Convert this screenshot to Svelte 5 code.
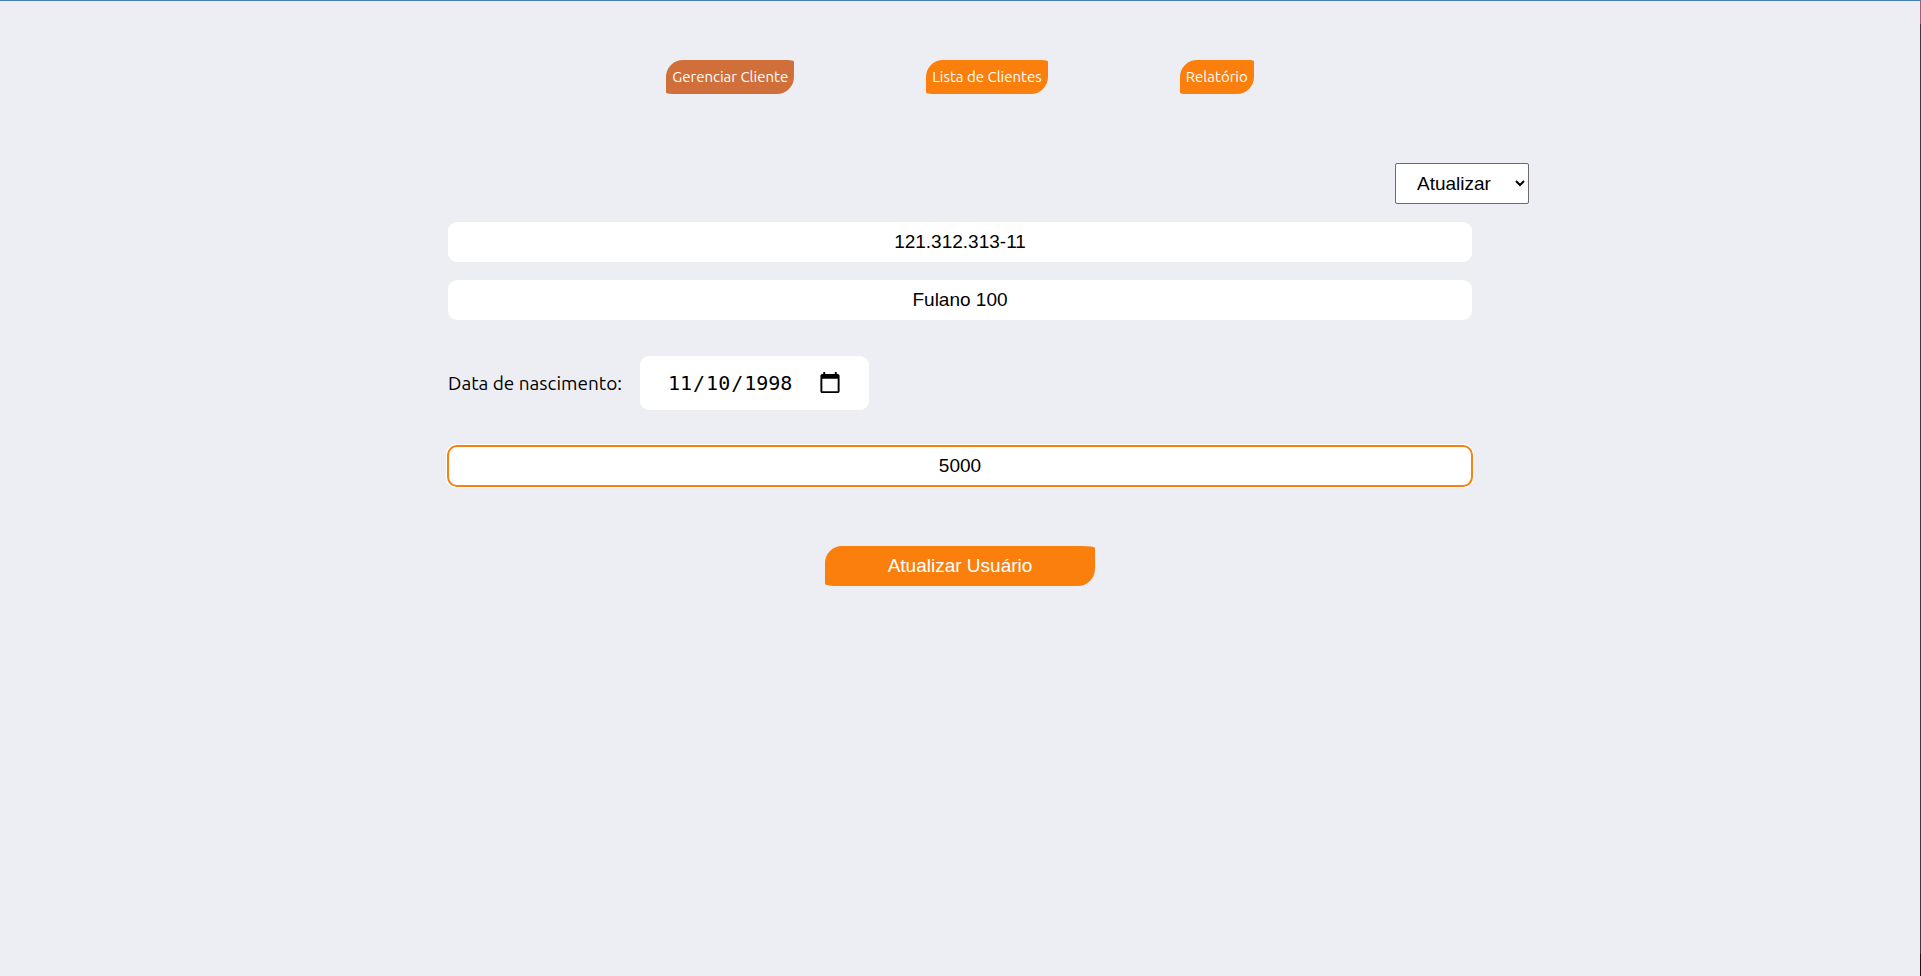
<script>
  const tabs = [
    { label: 'Gerenciar Cliente', active: true },
    { label: 'Lista de Clientes', active: false },
    { label: 'Relatório', active: false },
  ];
  let action = $state('Atualizar');
  let cpf = $state('121.312.313-11');
  let name = $state('Fulano 100');
  let birth = $state('1998-11-10');
  let income = $state('5000');
</script>

<div class="page">
  <nav>
    {#each tabs as tab}
      <a href="#top" class="leaf" class:active={tab.active}>{tab.label}</a>
    {/each}
  </nav>
  <form onsubmit={(e) => e.preventDefault()}>
    <select class="action" aria-label="Ação" bind:value={action}>
      <option>Cadastrar</option>
      <option>Atualizar</option>
      <option>Deletar</option>
    </select>
    <input class="field" type="text" aria-label="CPF" bind:value={cpf} />
    <input class="field" type="text" aria-label="Nome" bind:value={name} />
    <div class="birth">
      <label for="birth">Data de nascimento:</label>
      <input id="birth" type="date" bind:value={birth} />
    </div>
    <input class="field current" type="text" aria-label="Renda" bind:value={income} />
    <button class="leaf submit" type="submit">Atualizar Usuário</button>
  </form>
</div>

<style>
  :global(body) {
    margin: 0;
    background: #edeef4;
  }
  .page {
    box-sizing: border-box;
    min-height: 100vh;
    border-top: 1px solid #4a7ab4;
    padding: 59px 25px 59px 24px;
    background:
      linear-gradient(#a35a80 0 23px, #383a48 23px 953px, #17151c 953px) right / 1px 100% no-repeat,
      #edeef4;
    font-family: Ubuntu, 'Noto Sans', sans-serif;
    color: #000;
  }
  nav {
    display: flex;
    justify-content: center;
    gap: 132px;
  }
  .leaf {
    border-radius: 17px 5%;
    background: #fa7f0c;
    color: #fff;
    text-decoration: none;
  }
  nav .leaf {
    padding: 7px 6px;
    font-size: 15px;
    line-height: 20px;
  }
  nav .active {
    background: #d16f3a;
  }
  form {
    display: flex;
    flex-direction: column;
    gap: 18px;
    max-width: 1024px;
    margin: 69px auto 0;
  }
  input,
  select,
  button {
    box-sizing: border-box;
    font-size: 19px;
  }
  .field,
  select,
  button {
    font-family: 'Liberation Sans', Arial, sans-serif;
  }
  .action {
    align-self: flex-end;
    width: 134px;
    height: 41px;
    margin-right: -57px;
    padding: 0 0 0 17px;
    border: 1px solid #6b6b6b;
    border-radius: 2px;
    background: #fff;
    color: #000;
  }
  .field {
    width: 100%;
    height: 40px;
    border: 0;
    border-radius: 9px;
    background: #fff;
    text-align: center;
    color: #000;
  }
  .current {
    outline: auto 1px #fa7f0c;
  }
  .birth {
    display: flex;
    align-items: center;
    gap: 18px;
    margin: 18px 0;
    font-size: 19px;
  }
  .birth input {
    width: 229px;
    height: 54px;
    padding: 0 27px;
    border: 0;
    border-radius: 9px;
    background: #fff;
    font-family: 'DejaVu Sans Mono', monospace;
    font-size: 20px;
    color: #000;
  }
  .birth input::-webkit-calendar-picker-indicator {
    width: 24px;
    height: 24px;
    padding: 0;
  }
  .submit {
    align-self: center;
    width: 270px;
    height: 40px;
    margin-top: 42px;
    border: 0;
    cursor: pointer;
  }
</style>
